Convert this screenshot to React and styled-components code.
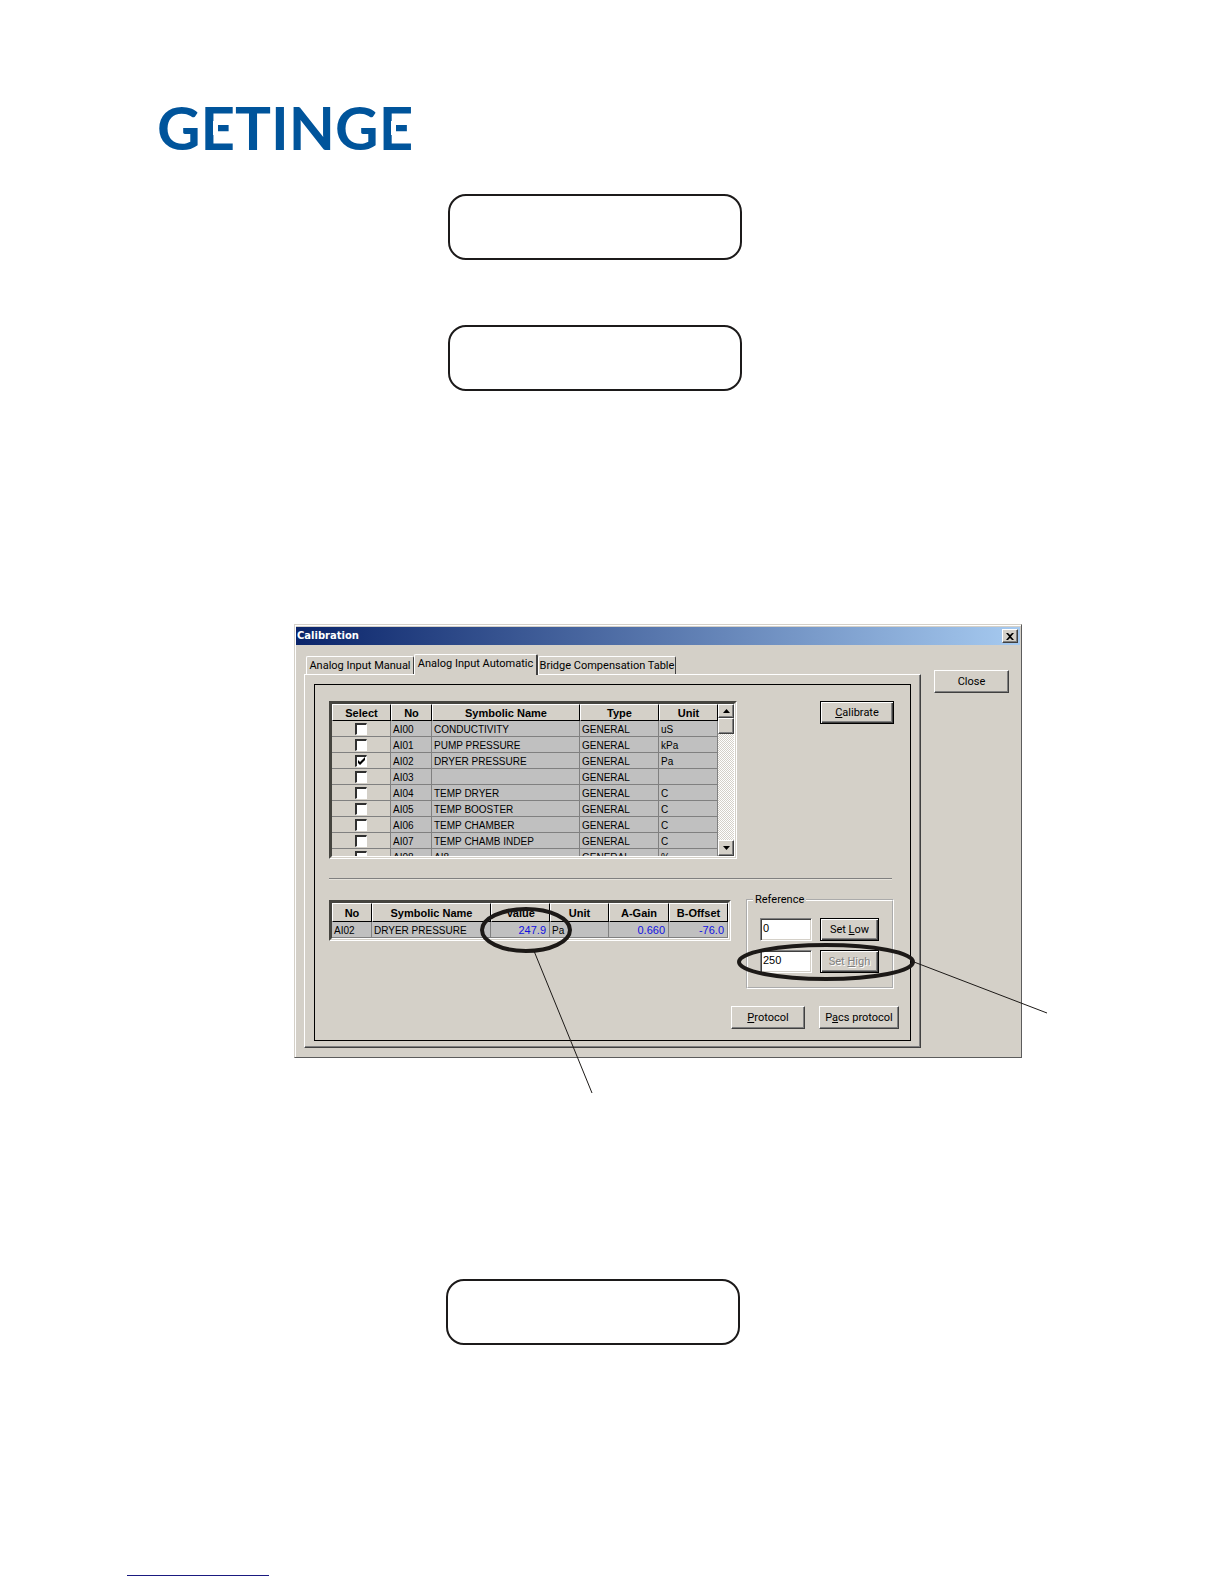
import { useState } from "react";
import styled, { createGlobalStyle, css } from "styled-components";

const GlobalStyle = createGlobalStyle`
    * {
        box-sizing: border-box;
    }
    body {
        margin: 0;
        background: #fff;
        color: #000;
        font-family: "Liberation Sans", Arial, sans-serif;
        font-size: 11px;
    }
    button, input, table {
        font: inherit;
        color: inherit;
    }
`;

const Page = styled.main`
    display: flex;
    flex-direction: column;
    min-height: 100vh;
    padding-bottom: 8px;
`;

const LogoWrapper = styled.header`
    padding: 83px 0 31px 152px;
    svg {
        display: block;
    }
`;

const CalloutList = styled.section`
    display: flex;
    flex-direction: column;
    align-items: center;
    gap: 65px;
    padding-right: ${props => props.$right || 34}px;
`;

const Callout = styled.div`
    width: 294px;
    height: 66px;
    border: 2px solid #1c1a1a;
    border-radius: 18px;
`;

const Dialog = styled.section`
    margin: 233px 202px 221px 294px;
    padding: 2px 1px 1px;
    background: #d4d0c8;
    border: 1px solid;
    border-color: #d4d0c8 #5c5c5c #5c5c5c #d4d0c8;
    box-shadow: inset 1px 1px #fff;
`;

const TitleBar = styled.div`
    display: flex;
    align-items: center;
    justify-content: space-between;
    height: 18px;
    padding: 0 2px 0 1px;
    background: linear-gradient(to right, #0a246a, #a6caf0);
    h1 {
        margin: 0;
        color: #fff;
        font-family: "DejaVu Sans", sans-serif;
        font-size: 10px;
        line-height: 16px;
        font-weight: bold;
    }
`;

const raised = css`
    border: 1px solid;
    border-color: #fff #404040 #404040 #fff;
    box-shadow: inset -1px -1px #808080;
`;

const Button = styled.button`
    width: ${props => props.$width || 59}px;
    height: 23px;
    padding: 0;
    background: #d4d0c8;
    border-radius: 0;
    font-family: Roboto, sans-serif;
    white-space: nowrap;
    ${raised}
    ${props => props.$outlined && css`
        border-color: #000;
        box-shadow: inset 1px 1px #fff, inset -1px -1px #404040, inset -2px -2px #808080;
    `}
    &:disabled {
        color: #808080;
        text-shadow: 1px 1px #fff;
    }
`;

const SmallButton = styled.button`
    display: flex;
    align-items: center;
    justify-content: center;
    width: 16px;
    height: ${props => props.$height || 16}px;
    padding: 0;
    background: #d4d0c8;
    ${raised}
`;

const DialogBody = styled.div`
    display: flex;
    gap: 13px;
    padding: 9px 11px 8px 8px;
`;

const TabArea = styled.div`
    flex: 1;
    min-width: 0;
`;

const SideArea = styled.div`
    padding-top: 16px;
`;

const TabList = styled.div`
    display: flex;
    align-items: flex-end;
    height: 20px;
    padding-left: 2px;
`;

const Tab = styled.button`
    width: ${props => props.$width}px;
    height: 18px;
    padding: 0;
    background: #d4d0c8;
    font-family: Roboto, sans-serif;
    white-space: nowrap;
    border: solid;
    border-width: 1px 1px 0;
    border-color: #fff #404040 #fff #fff;
    border-radius: 2px 2px 0 0;
    &[aria-selected="true"] {
        position: relative;
        height: 21px;
        margin-bottom: -1px;
        padding-bottom: 3px;
        border-right-width: 2px;
    }
`;

const TabPanel = styled.div`
    padding: 9px 9px 6px;
    border: 1px solid;
    border-color: #fff #404040 #404040 #fff;
    box-shadow: inset -1px -1px #808080;
`;

const Frame = styled.div`
    padding: 16px 11px 11px 14px;
    border: 1px solid #000;
`;

const Row = styled.div`
    display: flex;
    justify-content: space-between;
    align-items: flex-start;
    gap: 14px;
    padding-right: 5px;
`;

const ActionRow = styled.div`
    display: flex;
    justify-content: flex-end;
    gap: 14px;
    padding-top: 17px;
`;

const Divider = styled.hr`
    margin: 19px 7px 13px 0;
    border: solid;
    border-width: 1px 0;
    border-color: #808080 transparent #e6e3dc;
`;

const Grid = styled.div`
    display: flex;
    width: ${props => props.$width}px;
    height: ${props => props.$height}px;
    border: 3px solid #45443f;
    border-right: 3px double #fff;
    border-bottom: 3px double #fff;
    overflow: ${props => props.$scroll ? "hidden" : "visible"};
`;

const LowerGrid = styled.div`
    padding-top: 7px;
`;

const Table = styled.table`
    flex: 1;
    width: 0;
    height: 1px;
    table-layout: fixed;
    border-collapse: separate;
    border-spacing: 0;
    th {
        height: ${props => props.$headHeight}px;
        padding: 0;
        line-height: 12px;
        font-weight: bold;
        border: 1px solid;
        border-color: #fff #000 #000 #fff;
    }
    td {
        height: 16px;
        padding: 2px 0 0 2px;
        overflow: hidden;
        background: #c0c0c0;
        border: solid #808080;
        border-width: 0 1px 1px 0;
        font-size: 10px;
        line-height: 12px;
        white-space: nowrap;
    }
`;

const CheckCell = styled.td`
    && {
        padding: 0;
        background: #d4d0c8;
        text-align: center;
    }
`;

const ValueCell = styled.td`
    && {
        position: relative;
        padding: 0 3px 0 0;
        overflow: visible;
        color: #1010e0;
        font-size: 11px;
        text-align: right;
    }
`;

const Check = styled.input`
    appearance: none;
    display: block;
    width: 12px;
    height: 12px;
    margin: 1px auto 0;
    background: #fff;
    border: solid;
    border-width: 2px 1px 1px 2px;
    border-color: #303030 #fff #fff #303030;
    &:checked {
        background: #fff url("data:image/svg+xml,%3Csvg xmlns='http://www.w3.org/2000/svg' viewBox='0 0 9 9'%3E%3Cpath d='M1 3v3l2 2 5-5V0L3 5z'/%3E%3C/svg%3E") center / 9px 9px no-repeat;
    }
`;

const ScrollTrack = styled.div`
    display: flex;
    flex-direction: column;
    width: 16px;
    background: repeating-conic-gradient(#fff 0 25%, #d4d0c8 0 50%) 0 0 / 2px 2px;
    button:last-child {
        margin-top: auto;
    }
`;

const ScrollThumb = styled.div`
    height: 16px;
    background: #d4d0c8;
    ${raised}
`;

const ReferenceBox = styled.fieldset`
    width: 148px;
    min-width: 0;
    margin: 0;
    padding: 12px 12px 14px;
    border: 2px groove #fff;
    legend {
        margin-left: -7px;
        padding: 0 2px;
        font-family: Roboto, sans-serif;
        line-height: 13px;
    }
`;

const Fields = styled.div`
    position: relative;
    display: grid;
    grid-template-columns: 52px 59px;
    gap: 9px 8px;
`;

const TextBox = styled.input`
    width: 52px;
    height: 23px;
    padding: 0 2px 3px;
    background: #fff;
    border: 1px solid;
    border-color: #808080 #fff #fff #808080;
    border-radius: 0;
    box-shadow: inset 1px 1px #404040, inset -1px -1px #d4d0c8;
`;

const Marker = styled.svg`
    position: absolute;
    z-index: 1;
    left: ${props => props.$left}px;
    top: ${props => props.$top}px;
    fill: none;
    stroke: #1c1917;
    pointer-events: none;
`;

const FooterLink = styled.a`
    width: 142px;
    height: 1px;
    margin: auto 0 0 127px;
    background: #1a1a80;
`;

const FooterSpace = styled.footer`
    display: flex;
    flex: 1;
    padding-top: 229px;
`;

const channels = [
    { no: "AI00", name: "CONDUCTIVITY", type: "GENERAL", unit: "uS" },
    { no: "AI01", name: "PUMP PRESSURE", type: "GENERAL", unit: "kPa" },
    { no: "AI02", name: "DRYER PRESSURE", type: "GENERAL", unit: "Pa" },
    { no: "AI03", name: "", type: "GENERAL", unit: "" },
    { no: "AI04", name: "TEMP DRYER", type: "GENERAL", unit: "C" },
    { no: "AI05", name: "TEMP BOOSTER", type: "GENERAL", unit: "C" },
    { no: "AI06", name: "TEMP CHAMBER", type: "GENERAL", unit: "C" },
    { no: "AI07", name: "TEMP CHAMB INDEP", type: "GENERAL", unit: "C" },
    { no: "AI08", name: "AI8", type: "GENERAL", unit: "%" },
];

const tabs = [
    { label: "Analog Input Manual", width: 108 },
    { label: "Analog Input Automatic", width: 124 },
    { label: "Bridge Compensation Table", width: 138 },
];

// the white bars split the middle arm of each E from its stem
const Logo = () => (
    <svg width="290" height="80" role="img" aria-label="GETINGE">
        <text x="5" y="67" fill="#00549b" fontFamily="Lato, sans-serif" fontWeight="bold" fontSize="60">GETINGE</text>
        <path d="M61 38h5v14h-5zM239 38h5v14h-5z" fill="#fff" />
    </svg>
);

const ChannelGrid = () => {
    const [selected, setSelected] = useState(["AI02"]);
    const toggle = (no) => {
        setSelected(selected.includes(no) ? selected.filter(item => item !== no) : [...selected, no]);
    }
    return (
        <Grid $width={408} $height={158} $scroll>
            <Table $headHeight={17}>
                <colgroup>
                    <col width="59" /><col width="41" /><col width="148" /><col width="79" /><col width="59" />
                </colgroup>
                <thead>
                    <tr><th>Select</th><th>No</th><th>Symbolic Name</th><th>Type</th><th>Unit</th></tr>
                </thead>
                <tbody>
                    {channels.map(({ no, name, type, unit }) => (
                        <tr key={no}>
                            <CheckCell>
                                <Check type="checkbox" aria-label={no} checked={selected.includes(no)} onChange={() => toggle(no)} />
                            </CheckCell>
                            <td>{no}</td>
                            <td>{name}</td>
                            <td>{type}</td>
                            <td>{unit}</td>
                        </tr>
                    ))}
                </tbody>
            </Table>
            <ScrollTrack>
                <SmallButton $height={14} aria-label="Scroll up">
                    <svg width="7" height="4"><path d="M0 4h7L3.500 0z" /></svg>
                </SmallButton>
                <ScrollThumb />
                <SmallButton aria-label="Scroll down">
                    <svg width="7" height="4"><path d="M0 0h7L3.500 4z" /></svg>
                </SmallButton>
            </ScrollTrack>
        </Grid>
    );
}

const ValueGrid = () => (
    <LowerGrid>
        <Grid $width={402} $height={41}>
            <Table $headHeight={19}>
                <colgroup>
                    <col width="40" /><col width="119" /><col width="59" /><col width="59" /><col width="60" /><col width="59" />
                </colgroup>
                <thead>
                    <tr><th>No</th><th>Symbolic Name</th><th>Value</th><th>Unit</th><th>A-Gain</th><th>B-Offset</th></tr>
                </thead>
                <tbody>
                    <tr>
                        <td>AI02</td>
                        <td>DRYER PRESSURE</td>
                        <ValueCell>
                            247.9
                            <Marker width="116" height="190" $left={-11} $top={-15}>
                                <ellipse cx="46" cy="23" rx="44" ry="21" strokeWidth="4" />
                                <path d="M54 44l58 142" />
                            </Marker>
                        </ValueCell>
                        <td>Pa</td>
                        <ValueCell>0.660</ValueCell>
                        <ValueCell>-76.0</ValueCell>
                    </tr>
                </tbody>
            </Table>
        </Grid>
    </LowerGrid>
);

const ReferenceFields = () => {
    const [low, setLow] = useState("0");
    const [high, setHigh] = useState("250");
    return (
        <ReferenceBox>
            <legend>Reference</legend>
            <Fields>
                <TextBox aria-label="Low reference" value={low} onChange={e => setLow(e.target.value)} />
                <Button $outlined>Set <u>L</u>ow</Button>
                <TextBox aria-label="High reference" value={high} onChange={e => setHigh(e.target.value)} />
                <Button $outlined disabled>Set <u>H</u>igh</Button>
                <Marker width="314" height="76" $left={-23} $top={25}>
                    <ellipse cx="89" cy="19" rx="87" ry="17" strokeWidth="4" />
                    <path d="M177 19l133 51" />
                </Marker>
            </Fields>
        </ReferenceBox>
    );
}

const CalibrationDialog = () => {
    const [activeTab, setActiveTab] = useState(1);
    return (
        <Dialog role="dialog" aria-label="Calibration">
            <TitleBar>
                <h1>Calibration</h1>
                <SmallButton $height={14} aria-label="Close window">
                    <svg width="8" height="7"><path d="M0 0h2l2 2 2-2h2L5 3.500 8 7H6L4 5 2 7H0l3-3.500z" /></svg>
                </SmallButton>
            </TitleBar>
            <DialogBody>
                <TabArea>
                    <TabList role="tablist">
                        {tabs.map((tab, index) => (
                            <Tab key={tab.label} role="tab" $width={tab.width} aria-selected={index === activeTab} onClick={() => setActiveTab(index)}>
                                {tab.label}
                            </Tab>
                        ))}
                    </TabList>
                    <TabPanel role="tabpanel">
                        <Frame>
                            <Row>
                                <ChannelGrid />
                                <Button $width={74} $outlined><u>C</u>alibrate</Button>
                            </Row>
                            <Divider />
                            <Row>
                                <ValueGrid />
                                <ReferenceFields />
                            </Row>
                            <ActionRow>
                                <Button $width={74}><u>P</u>rotocol</Button>
                                <Button $width={80}>P<u>a</u>cs protocol</Button>
                            </ActionRow>
                        </Frame>
                    </TabPanel>
                </TabArea>
                <SideArea>
                    <Button $width={75}>Close</Button>
                </SideArea>
            </DialogBody>
        </Dialog>
    );
}

const App = () => {
    return (
        <>
            <GlobalStyle />
            <Page>
                <LogoWrapper><Logo /></LogoWrapper>
                <CalloutList>
                    <Callout />
                    <Callout />
                </CalloutList>
                <CalibrationDialog />
                <CalloutList $right={38}>
                    <Callout />
                </CalloutList>
                <FooterSpace>
                    <FooterLink href="#top" aria-label="Back to top" />
                </FooterSpace>
            </Page>
        </>
    );
}

export default App;
